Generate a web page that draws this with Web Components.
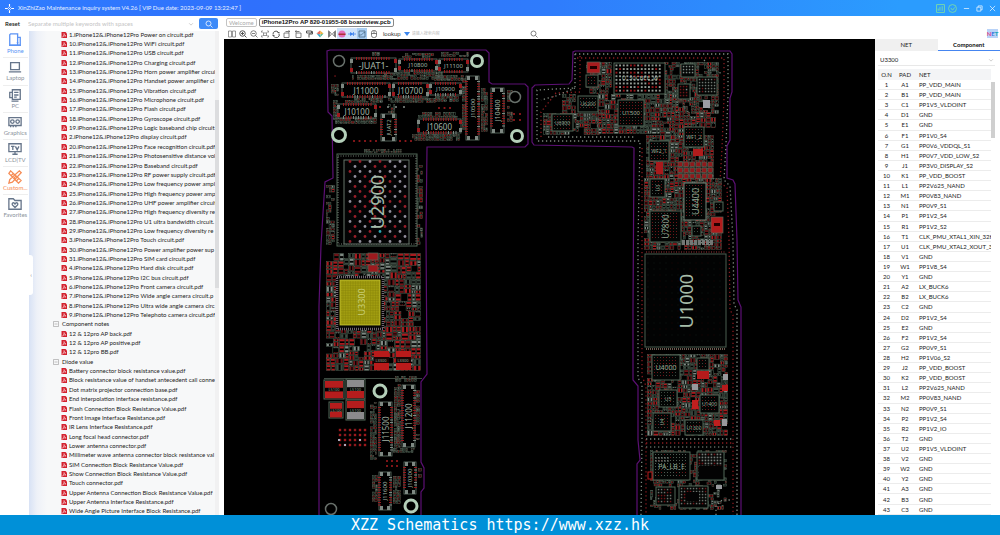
<!DOCTYPE html>
<html lang="en">
<head>
<meta charset="utf-8">
<title>XinZhiZao Maintenance inquiry system</title>
<style>
html, body { margin: 0; height: 100%; }
body { font: 6px/8px Lato, "Noto Sans", "Noto Sans CJK SC", sans-serif; color: #1c1c1c; background: #fff; overflow: hidden; }
</style>
</head>
<body>
<xz-app></xz-app>
<script>
const define = (name, html, setup) => customElements.define(name, class extends HTMLElement {
  connectedCallback() {
    if (this.shadowRoot) return;
    const t = document.createElement('template');
    t.innerHTML = typeof html === 'function' ? html(this) : html;
    this.attachShadow({ mode: 'open' }).append(t.content.cloneNode(true));
    if (setup) setup(this);
  }
});

const icons = {
  logo: '<path d="M8 0v5M8 11v5M0 8h5M11 8h5" stroke-width="2"/><path d="M5.5 5.500 8 8l3-3M5 11l3-3 2.500 2.500" stroke-width="1.200"/>',
  phone: '<path d="M3 1h8v13H2V2zM11 5h3v9h-3M10 11h2" /><path d="M1.500 14h13"/>',
  laptop: '<path d="M3 3h10v8H3zM1 13.500h14"/>',
  pc: '<path d="M5 2h9v11H5zM7 5h5M7 8h5M7 10.500h3M5 5H2v6h3M4 15h8"/>',
  graphics: '<path d="M1 3h14v9H1zM3 12v2M6 12v2M9 12v2"/><circle cx="5" cy="7.500" r="2"/><circle cx="11" cy="7.500" r="2"/>',
  lcd: '<path d="M1 2h14v9H1zM5 14h6M8 11v3M3.500 5h4M5.500 5v4M8.500 5l2 4 2-4"/>',
  custom: '<path d="M3 1 15 12l-3 3L1 4zM13 1l2 2L5 14l-4 1 1-4zM4 6l2-2M7 9l2-2M10 12l2-2"/>',
  fav: '<path d="M1 2h5l2 2h7v10H1z"/><path d="M8 12 5 9c-1-3 2-3 3-1 1-2 4-2 3 1z"/>',
  search: '<circle cx="7" cy="7" r="5"/><path d="m11 11 4 4"/>',
  panes: '<path d="M1 2h6v12H1zM9 2h6v12H9z" stroke-width="1.200"/>',
  zin: '<circle cx="7" cy="7" r="5.500" stroke-width="2"/><path d="m11 11 4 4M4 7h6M7 4v6" stroke-width="2"/>',
  zout: '<circle cx="7" cy="7" r="5.500"/><path d="m11 11 4 4M4 7h6"/>',
  fit: '<path d="M1 5V2h3M12 2h3v3M15 11v3h-3M4 14H1v-3M5 6h6v5H5zM3 4l2 2M13 4l-2 2M3 12l2-2M13 12l-2-2" stroke-width="1.200"/>',
  rotate: '<path d="M2 9a6 6 0 0 1 11-4M14 7a6 6 0 0 1-11 5M11 5h4M1 11h4" stroke-width="2"/>',
  turnr: '<path d="M2 6h10v9H2zM5 3h8M11 1l3 2-3 2" stroke-width="1.500"/>',
  turnl: '<path d="M4 6h10v9H4zM3 3h8M5 1 2 3l3 2" stroke-width="1.500"/>',
  brush: '<path d="M3 2h10v4H3zM13 3h2v5H8v7" stroke-width="2"/>',
  flip: '<path d="M1 1v14M15 1v14M3 3l4 5-4 5zM13 3 9 8l4 5z"/>',
  layers: '<path d="M1 7l7-6 1 8z" fill="#ef6a5a" stroke="none"/><path d="M8 1l7 6-6 2z" fill="#f1b13e" stroke="none"/><path d="M1 7l7 2v6z" fill="#35a4c8" stroke="none"/><path d="M15 7 9 9l-1 6z" fill="#43b58a" stroke="none"/>',
  pink: '<circle cx="8" cy="8" r="7" fill="#e26ab8" stroke="none"/><path d="M1 7h14v3H1z" fill="#a33" stroke="none"/>',
  diode: '<path d="M0 8h16M11 4v8" stroke="#3c82ee" stroke-width="1.500"/><path d="M4 4l7 4-7 4z" fill="#3c82ee" stroke="none"/>',
  mirror: '<path d="M2 2h12v12H2zM2 10h3c4 0 4-5 9-5" stroke="#40627c"/>',
  mouse: '<rect x="3" y="1" width="10" height="14" rx="4"/><path d="M3 7h10M8 1v6" stroke-width="1.500"/>',
  chev: '<path d="m3 6 5 5 5-5"/>',
  min: '<path d="M2 8h12"/>',
  restore: '<path d="M2 5h9v9H2zM5 5V2h9v9h-3"/>',
  close: '<path d="m2 2 12 12M14 2 2 14"/>',
  chart: '<path d="M1 1h14v14H1zM4 12V8M7 12V5M11 12V4"/>',
  help: '<circle cx="8" cy="8" r="7"/><path d="M5 7l3 4 4-5" />'
};
define('xz-icon', el => `<style>
:host{display:inline-flex;flex:none;width:9px;height:9px}
svg{width:100%;height:100%;fill:none;stroke:currentColor;stroke-width:1.500}
</style><svg viewBox="0 0 16 16" aria-hidden="true">${icons[el.getAttribute('name')]}</svg>`);

define('xz-titlebar', `<style>
:host{display:flex;align-items:center;height:16px;color:#e8f1ff;background:linear-gradient(90deg,#2f7dff,#2f70fc 25%,#2f7cfc 55%,#2b9cfe 90%)}
h1{font:inherit;font-family:Lato,sans-serif;margin:0 auto 0 4px}
.logo{margin-left:5px;color:#fff}
.g{color:#7fe0a0;margin-right:3px}
button{all:unset;display:flex;margin:0 3px;color:#fff}
button xz-icon{width:7px;height:7px}
.end{margin-right:4px}
</style><xz-icon class="logo" name="logo"></xz-icon>
<h1>XinZhiZao Maintenance inquiry system V4.26 [ VIP Due date: 2023-09-09 13:22:47 ]</h1>
<xz-icon class="g" name="chart"></xz-icon><xz-icon class="g" name="help"></xz-icon>
<button aria-label="Minimize"><xz-icon name="min"></xz-icon></button><button aria-label="Restore"><xz-icon name="restore"></xz-icon></button><button class="end" aria-label="Close"><xz-icon name="close"></xz-icon></button>`);

define('xz-search', `<style>
:host{display:flex;align-items:center;height:15px;background:#fff}
button{all:unset;display:flex;align-items:center;justify-content:center}
.reset{width:25px;color:#111;font-weight:600}
input{all:unset;flex:1;min-width:0;padding-left:3px;height:11px}
input::placeholder{color:#c4c4c4;opacity:1}
.dd{color:#aaa;margin-right:3px;width:6px;height:6px}
.go{background:#3f8bf8;border-radius:2px;width:19px;height:11px;color:#fff;margin:0 1px 0 2px}
.go xz-icon{width:8px;height:8px}
</style><button class="reset">Reset</button><input aria-label="Keywords" placeholder="Separate multiple keywords with spaces"><xz-icon class="dd" name="chev"></xz-icon><button class="go" aria-label="Search"><xz-icon name="search"></xz-icon></button>`);

define('xz-nav', `<style>
:host{display:flex;flex-direction:column;width:29px;background:#fff}
nav{display:flex;flex-direction:column;flex:1}
ul{list-style:none;margin:0;padding:0 3px;display:grid;grid-auto-rows:1fr;flex:0 0 191px}
li{border-bottom:1px solid #eee;display:grid}
li:last-child{border:0}
a{display:flex;flex-direction:column;align-items:center;justify-content:center;color:#8b929c;text-decoration:none;white-space:nowrap}
xz-icon{width:14px;height:14px;color:#66758a}
.on,.on xz-icon{color:#5c94f5}
.hot,.hot xz-icon{color:#f68c55}
</style><nav><ul>${[['phone','Phone','on'],['laptop','Laptop',''],['pc','PC',''],['graphics','Graphics',''],['lcd','LCD|TV',''],['custom','Custom...','hot'],['fav','Favorites','']].map(([i,t,c])=>`<li><a href="#" class="${c}"><xz-icon name="${i}"></xz-icon>${t}</a></li>`).join('')}</ul></nav>`);

const P = '.iPhone12&amp;.iPhone12Pro ';
const circuits = ['1|Power on circuit.pdf','10|WiFi circuit.pdf','11|USB circuit.pdf','12|Charging circuit.pdf','13|Horn power amplifier circui','14|Handset power amplifier ci','15|Vibration circuit.pdf','16|Microphone circuit.pdf','17|Flash circuit.pdf','18|Gyroscope circuit.pdf','19|Logic baseband chip circuit','2|display circuit.pdf','20|Face recognition circuit.pdf','21|Photosensitive distance vol','22|Baseband circuit.pdf','23|RF power supply circuit.pdf','24|Low frequency power ampl','25|High frequency power amp','26|UHF power amplifier circuit','27|High frequency diversity re','28|U1 ultra bandwidth circuit.','29|Low frequency diversity re','3|Touch circuit.pdf','30|Power amplifier power sup','31|SIM card circuit.pdf','4|Hard disk circuit.pdf','5|I2C bus circuit.pdf','6|Front camera circuit.pdf','7|Wide angle camera circuit.p','8|Ultra wide angle camera circ','9|Telephoto camera circuit.pdf'];
const rows = [
  ...circuits.map(c => c.replace('|', P)),
  '#Component notes','12 &amp; 12pro AP back.pdf','12 &amp; 12pro AP positive.pdf','12 &amp; 12pro BB.pdf','#Diode value',
  'Battery connector block resistance value.pdf','Block resistance value of handset antecedent call conne','Dot matrix projector connection base.pdf','End interpolation interface resistance.pdf','Flash Connection Block Resistance Value.pdf','Front Image Interface Resistance.pdf','IR Lens Interface Resistance.pdf','Long focal head connector.pdf','Lower antenna connector.pdf','Millimeter wave antenna connector block resistance val','SIM Connection Block Resistance Value.pdf','Show Connection Block Resistance Value.pdf','Touch connector.pdf','Upper Antenna Connection Block Resistance Value.pdf','Upper Antenna Interface Resistance.pdf','Wide Angle Picture Interface Block Resistance.pdf'];
define('xz-tree', `<style>
:host{position:relative;display:flex;flex:1;min-width:0;min-height:0;overflow:hidden;background:linear-gradient(90deg,#d8e2f5,#eef1f8 8px,#f7f8f9 18px)}
ul{flex:1;min-width:0;display:grid;grid-auto-rows:1fr;margin:-1px 0;padding:0 0 0 24px;list-style:none;overflow:hidden}
li{display:flex;align-items:center;min-width:0;min-height:0}
a{display:flex;align-items:center;gap:2px;margin-left:8px;color:inherit;text-decoration:none;white-space:nowrap}
svg{width:6px;height:6px;flex:none}
button{all:unset;display:flex;align-items:center;gap:3px}
.bar{width:4px;flex:none;background:#f1f1f2;display:flex;flex-direction:column}
.bar::before{content:"";flex:0 0 69px}
.bar::after{content:"";flex:0 0 188px;background:#dcdddf}
.pull{position:absolute;left:0;top:224px;width:4px;height:40px;background:#fff;border-radius:0 3px 3px 0;color:#888;align-items:center;justify-content:center;display:flex}
</style><ul>${rows.map(r => r[0]==='#' ? `<li><button><svg viewBox="0 0 12 12" fill="none" stroke="#888"><path d="M1 1h10v10H1zM3 6h6"/></svg>${r.slice(1)}</button></li>` : `<li><a href="#"><svg viewBox="0 0 12 12"><path d="M1 0h8l3 3v9H1z" fill="#d3222f"/><path d="M3 10c2-1 3-4 3-7 1 3 3 5 4 5-3-1-5 0-7 2" fill="none" stroke="#fff"/></svg>${r}</a></li>`).join('')}</ul><div class="bar"></div><button class="pull" aria-label="Collapse">‹</button>`);

define('xz-tabs', `<style>
:host{display:flex;align-items:center;gap:2px;height:12px;padding-left:2px;background:#fff}
button{all:unset;box-sizing:border-box;height:9px;line-height:7px;padding:0 2px;border:1px solid #c3c3c3;border-radius:2px;color:#aaa;min-width:30px;text-align:center}
.on{color:#111;border-color:#888;font:700 6px/7px "Liberation Sans",sans-serif;padding:0 2px}
</style><button>Welcome</button><button class="on">iPhone12Pro AP 820-01955-08 boardview.pcb</button>`);

define('xz-toolbar', `<style>
:host{display:flex;align-items:center;height:11px;padding:0 2px 0 2px;background:#fff;color:#555}
button{all:unset;display:flex;padding:1px;height:9px;width:9px;align-items:center;justify-content:center}
xz-icon{width:8px;height:8px}
.sel{background:#cfe3fb;width:8px}
.sel2{background:#a9cdf2;width:8px}
.gap{margin-left:1px}
label{margin-left:4px;color:#333;display:flex;align-items:center;gap:3px;font-family:"Liberation Sans",sans-serif}
label::after{content:"";border:3px solid transparent;border-top:4px solid #3b86ee;border-bottom:0}
input{all:unset;width:117px;font-size:4px;margin-left:2px;color:#333}
input::placeholder{color:#bbb;opacity:1}
.net{margin-left:auto;background:#b9d3f8;font-weight:700;width:11px;padding:0}
i{font-style:normal}.a{color:#e04a8c}.b{color:#3a78e0}.c{color:#18a5b8}
</style>${['panes','zin','zout','fit','rotate','turnr','turnl','brush','layers'].map(n=>`<button aria-label="${n}"><xz-icon name="${n}"></xz-icon></button>`).join('')}<button class="gap" aria-label="flip"><xz-icon name="flip"></xz-icon></button><button class="sel" aria-label="layer colour"><xz-icon name="pink"></xz-icon></button><button class="sel" aria-label="diode"><xz-icon name="diode"></xz-icon></button><button class="sel2" aria-label="mirror"><xz-icon name="mirror"></xz-icon></button><button class="gap" aria-label="mouse"><xz-icon name="mouse"></xz-icon></button><label for="q">lookup</label><input id="q" placeholder="请输入搜索内容"><button aria-label="find"><xz-icon name="search"></xz-icon></button><button class="net"><i class="a">N</i><i class="b">E</i><i class="c">T</i></button>`);

function drawBoard() {
  let seed = 77, s = '';
  const R = () => (seed = (seed * 16807) % 2147483647) / 2147483647;
  const G = '#536859', RED = '#9c1a1e', DR = '#6d1418', GY = '#7e8882';
  const rect = (x,y,w,h,f,st,sw=.7) => { s += `<rect x="${x.toFixed(1)}" y="${y.toFixed(1)}" width="${w.toFixed(1)}" height="${h.toFixed(1)}" fill="${f}"${st?` stroke="${st}" stroke-width="${sw}"`:''}/>`; };
  const text = (t,x,y,fs,rot,c='#8fa693') => { s += `<text x="${x}" y="${y}" font-size="${fs}" fill="${c}" text-anchor="middle" dominant-baseline="central"${rot?` transform="rotate(-90 ${x} ${y})"`:''}>${t}</text>`; };
  let redShare = .36;
  const part = (x,y,w,h) => {
    const k = R(), pad = k < redShare ? '#a81b1f' : k < redShare+.15 ? GY : k < .85 ? DR : '#3c4a41';
    if (R() < .1) { rect(x,y,w,h,'#000',G,.5); for (let i=x+1;i<x+w-1;i+=1.800) { rect(i,y,.8,1,GY); rect(i,y+h-1,.8,1,RED); } return; }
    rect(x,y,w,h,'#000',G,.5);
    if (w>h) { rect(x+.3,y+.3,w*.34,h-.6,pad); rect(x+w*.66,y+.3,w*.34-.3,h-.6,pad); }
    else { rect(x+.3,y+.3,w-.6,h*.34,pad); rect(x+.3,y+h*.66,w-.6,h*.34-.3,pad); }
  };
  const fill = (x,y,w,h,m=6,d=.9) => {
    if (w > m || h > m) {
      const q = .35 + R()*.3;
      if (w > h) { fill(x,y,w*q,h,m,d); fill(x+w*q,y,w*(1-q),h,m,d); }
      else { fill(x,y,w,h*q,m,d); fill(x,y+h*q,w,h*(1-q),m,d); }
    } else if (R() < d) part(x+.4,y+.4,Math.max(1,w-.8),Math.max(1,h-.8));
  };
  const dots = (x,y,w,h,p,r,c1,c2,mix=.4) => { for (let j=y;j<=y+h;j+=p) for (let i=x;i<=x+w;i+=p) rect(i-r/2,j-r/2,r,r,R()<mix?c2:c1); };
  const chip = (x,y,w,h,t,fs,rot,o={}) => {
    rect(x,y,w,h,'#030504',o.st||G,1);
    dots(x+2.500,y+2.500,w-5,h-5,o.p||3,o.r||1,o.c1||'#3d4840',o.c2||DR,o.mix??.5);
    if (t) text(t,x+w/2,y+h/2,fs,rot);
  };
  const conn = (x,y,w,h,t,fs,v) => {
    rect(x,y,w,h,'#000','#63756a',.8);
    if (v) { for (let j=y+5;j<y+h-5;j+=2.500) { rect(x-1,j,3,1,RED); rect(x+w-2,j,3,1,R()<.7?RED:GY); }
      for (const a of [x+1,x+w-4]) { rect(a,y,3,4,GY); rect(a,y+h-4,3,4,GY); } }
    else { for (let i=x+5;i<x+w-5;i+=2.500) { rect(i,y-1,1,3,RED); rect(i,y+h-2,1,3,R()<.7?RED:GY); }
      for (const a of [y+1,y+h-5]) { rect(x-1,a,3,4,a>y+2?RED:GY); rect(x+w-2,a,3,4,a>y+2?GY:RED); } }
    text(t,x+w/2,y+h/2,fs,v,'#a3b5a6');
  };
  const ring = (x,y,r,thick) => { s += `<circle cx="${x}" cy="${y}" r="${r}" fill="#000" stroke="${thick?'#b4cfb9':'#68706b'}" stroke-width="${thick?3:1.500}"/>`; };
  const line = (pts,c,w,dash='') => { s += `<polyline points="${pts}" fill="none" stroke="${c}" stroke-width="${w}" ${dash?`stroke-dasharray="${dash}"`:''}/>`; };

  const PUR = '#5c1074';
  line('319,515 319,306 321,245 325,182 333,178 332,116 328,112 327,51 330,50 486,50 489,53 489,82 492,84 525,84 528,87 528,144 525,147 427,147 426,234 427,374 421,382 421,462 424,468 424,488 421,492 421,515', PUR, 1.200);
  line('637,515 637,464 640,460 638,440 638,386 633,380 633,310 634,148 632,147 534,145 532,142 532,88 535,85 569,84 572,80 573,52 575,51 730,51 732,54 732,92 730,98 730,140 727,146 727,178 733,180 735,184 737,240 738,300 741,307 741,515', PUR, 1.200);

  /* left board, upper section */
  [[352,75,38,5],[384,72,64,8],[441,52,28,5],[345,98,38,5],[388,98,48,5],[432,75,32,6],[435,96,24,6],[335,118,42,6],[418,112,40,6],[412,134,48,7],[481,88,7,44],[507,90,6,32],[331,84,8,12],[333,100,5,20],[388,104,7,14],[462,78,4,52],[372,52,8,4],[400,53,34,5]].forEach(a => fill(...a,4,.85));
  conn(351,58,45,15,'-JUAT1-',9); conn(399,59,38,12,'J10800',6); conn(439,59,29,13,'J11100',6);
  conn(342,83,48,14,'J11000',8); conn(393,83,35,14,'J10700',8); conn(430,83,31,12,'J10900',6);
  conn(338,104,38,14,'J10100',8); conn(418,119,43,14,'J10600',8);
  conn(381,114,15,27,'JUAT2',6,1); conn(466,76,13,64,'J10500',6,1); conn(491,88,13,45,'J10400',7,1);
  ring(339,61,5.500); ring(477,61,5.500,1); ring(515,97,5.500); ring(517,136,5.500,1); ring(339,135,6.500,1);
  dots(354,141,23,0,5.500,1.800,RED,RED); dots(400,141,12,0,5.500,1.800,RED,RED); dots(439,108,12,0,5.500,1.800,RED,RED);
  dots(514,114,7,7,6,1.800,RED,RED); dots(335,76,2,30,15,1.500,RED,DR); dots(380,107,30,0,8,1.800,GY,RED);

  /* U2900 */
  fill(364,149,38,4,3,.8); fill(326,185,9,60,5,.6); fill(416,165,7,80,5,.55);
  rect(337,154,80,92,'#000',G,1); line('338,156 416,156 416,244 338,244 338,156','#6f7a71',1.200,'1 1.500');
  rect(344,160,65,84,'#040405','#66756b',1);
  for (let j=0;j<17;j++) for (let i=0;i<12;i++) if ((i+j)%2===0) s += `<circle cx="${350+i*5}" cy="${161.500+j*5}" r="1.400" fill="${R()<.42?'#96202a':R()<.04?'#2aa5b0':'#8f8c98'}"/>`;
  text('U2900',377,202,18,1,'#a6bca8');

  /* U3300 */
  redShare = .5;
  fill(326,253,95,118,8,.95);
  rect(336,276,48,54,'#050505'); line('337,277 383,277 383,329 337,329 337,277','#6f6570',2.500,'1 1');
  rect(340,280,40,45,'#a19d10','#c4c030',.8);
  for (let i=343;i<380;i+=2.500) line(`${i},281 ${i},324`,'#8a860a',.5);
  for (let i=283;i<325;i+=2.500) line(`341,${i} 379,${i}`,'#8a860a',.5);
  text('U3300',361,302,9,1,'#c9cf78');
  for (const x of [374,396]) { rect(x,351,15,19,'#b91b1b'); rect(x,357,15,6,'#1a0505'); text('L3300',x+7,360,4,0); }
  for (const y of [262,274]) { rect(368,y-9,10,7,RED,G); }

  /* left board, lower section */
  const coil = (x,y,w,h,a,b) => { rect(x,y,w,h,'#000',G,1); rect(x+1,y+1,w-2,h*.36,a); rect(x+1,y+h*.6,w-2,h*.36,b); text('L5100',x+w/2,y+h/2,4,0); };
  rect(324,378,98,1,'#3d4a41');
  coil(324,380,20,19,'#b51d1d','#b51d1d'); coil(346,379,19,20,'#8b8b8d','#b51d1d'); coil(329,402,14,16,'#b51d1d','#b51d1d'); coil(346,400,19,20,'#b51d1d','#8b8b8d');
  dots(340,430,26,16,5,2.400,'#9c191d','#8c191d'); rect(338,439,2,2,'#aab'); rect(359,439,2,2,'#aab'); rect(344,444,2,2,'#aab');
  redShare = .2;
  fill(370,402,7,58,4); fill(394,384,7,64,4); fill(393,448,22,5,4); fill(416,390,4,50,4); fill(395,376,22,6,4); fill(372,475,6,27,4); fill(393,476,8,28,4); fill(418,468,4,10,4); fill(394,404,6,40,4);
  conn(379,402,13,54,'J11500',8,1); conn(402,385,13,62,'J11200',8,1); conn(404,462,12,32,'J10300',6,1); conn(379,472,12,38,'J11600',6,1);
  ring(380,391,6,1); ring(411,506,6,1); ring(331,509,5.500);
  dots(387,461,12,5,5,1.800,RED,GY,.3);

  /* right board, via fences */
  const fence = (p,c,w='1.300',d='1.300 2.700') => line(p,c,w,d);
  fence('575,54 728,54 728,96 726,144 724,180 730,186 733,240 734,304 737,310 737,515','#7f887f');
  fence('577,58 724,58 724,98 722,148 720,182 727,188 729,240 730,310 733,315 733,515','#8a1c20');
  fence('575,54 575,88 537,90 537,141 640,141 638,240 638,378 642,384 642,442 641,515','#7f887f');
  fence('580,56 580,92 556,93 541,112 541,138','#8a1c20'); fence('548,137 636,137','#7f887f');
  fence('642,148 642,376 646,386 646,515','#8a1c20');
  fence('646,439 732,439','#7f887f'); fence('646,443 732,443','#8a1c20'); fence('646,447 732,447','#5f675f');
  fence('704,60 712,68 722,74','#7f887f'); fence('575,88 556,96 541,100','#7f887f');

  /* right board, upper parts */
  redShare = .34;
  fill(586,62,26,32,6,.85); fill(664,62,55,52,5,.75); fill(562,94,14,20,6,.85); fill(543,113,60,22,6,.85); fill(598,94,62,40,6.500,.92); fill(660,94,24,50,6,.88); fill(646,135,68,45,6,.92); fill(644,178,78,72,6,.92); fill(684,112,32,16,6,.8);
  rect(587,62,13,11,'#a81c1e',G); rect(590,66,7,3,'#200');
  rect(614,63,51,31,'#000',G,1); dots(616.500,65.500,46,26,3.600,1.900,'#929992','#95181c',.25); text('U_30CBEE_W',640,78,6,0,'#a8b8a8');
  chip(578,96,20,16,'U6200',5); chip(552,114,21,17,'U6900',5); chip(618,100,26,26,'U1500',6,0,{mix:.7}); chip(586,75,12,12,'',5);
  chip(681,64,14,13,'',5,0,{r:1.500,c1:GY,mix:.1}); chip(697,77,20,18,'',5,0,{r:1.500,c1:'#6d756f',mix:.1}); chip(678,84,12,15,'',5,0,{r:1.500,c1:GY,mix:.6}); rect(703,100,7,8,'#9c9ca4');
  chip(684,127,20,20,'WF1_2',5); chip(649,141,20,20,'WF2_1',5); 
  for (let j=0;j<3;j++) for (let i=0;i<6;i++) rect(678+i*6,162+j*6,4.500,4.500,'#8f181b',G,.6);
  rect(693,149,10,7,'#b01c1c'); rect(656,162,7,12,'#a81a1c');
  chip(650,179,15,18,'U3',5,1); chip(684,183,22,37,'U4400',9,1,{st:'#74887a'}); chip(650,211,31,31,'U7800',8,1,{mix:.65}); chip(692,226,9,10,'',5);
  rect(711,217,12,16,'#b01c1c',G); rect(714,223,6,3,'#200'); chip(714,202,9,9,'',5);
  for (let i=0;i<8;i++) rect(682+i*4,240,3,5,'#747876');

  /* U1000 */
  rect(645,251,82,98,'#000');
  rect(645,254,81,93,'#020303','#4b5e51',1); dots(648,257,76,87,6,.8,'#1f2a22','#340a0c',.5);
  line('646,252 726,252','#6d2327',1.500,'1 1.500'); line('646,349 726,349','#6e5a50',2,'1 1'); text('U1000',686,301,18,1,'#a6bca8');

  /* right board, lower parts */
  fill(647,354,81,82,6.500,.9); fill(650,450,77,60,5,.55);
  chip(652,355,28,25,'U4000',7,0,{mix:.7}); chip(659,390,18,17,'U5',5,0); chip(653,413,18,18,'U4',5,1); chip(700,395,19,18,'U1400',5,0,{mix:.7}); chip(685,420,18,15,'U1300',5); chip(697,358,12,12,'',5);
  rect(697,371,12,8,'#b51b1b'); rect(692,400,6,9,'#c01f1f'); rect(722,385,6,6,'#b51b1b'); rect(714,420,6,6,'#c01f1f'); rect(722,419,5,7,'#98989c'); rect(723,374,5,6,'#98989c'); rect(692,384,6,6,'#98989c');
  chip(653,452,37,28,'PA_LB_E',7,0,{mix:.15,c1:'#4f5b52'}); dots(656,458,14,4,3,1.400,GY,GY); chip(697,452,27,28,'',5,0,{r:1.700,c1:'#777c78',mix:.3}); rect(699,466,23,12,'#030303'); chip(679,486,29,22,'',5,0,{r:1.500,c1:'#6b706c',mix:.35}); rect(686,492,13,9,'#030303'); chip(656,487,19,18,'',5,0,{r:1.500,c1:'#6b706c',mix:.4});
  rect(716,485,6,4,'#98989c'); rect(648,472,4,7,'#000','#b51b1b',1); fence('716,515 716,506 722,500 732,500','#7f887f');
  return s;
}
define('xz-board', `<style>
:host{display:block;flex:1;min-width:0;min-height:0;background:#000;overflow:hidden}
svg{display:block;width:100%;height:100%;font-family:"Noto Sans",sans-serif}
</style><svg viewBox="224 39 651 476" preserveAspectRatio="xMidYMin slice" role="img" aria-label="Board view">${drawBoard()}</svg>`);

const nets = 'PP_VDD_MAIN PP_VDD_MAIN PP1V5_VLDOINT GND GND PP1V0_S4 PP0V6_VDDQL_S1 PP0V7_VDD_LOW_S2 PP3V0_DISPLAY_S2 PP_VDD_BOOST PP2V625_NAND PP0V83_NAND PP0V9_S1 PP1V2_S4 PP1V2_S2 CLK_PMU_XTAL1_XIN_32K CLK_PMU_XTAL2_XOUT_32 GND PP1V8_S4 GND LX_BUCK6 LX_BUCK6 GND PP1V2_S4 GND PP1V2_S4 PP0V9_S1 PP1V06_S2 PP_VDD_BOOST PP_VDD_BOOST PP2V625_NAND PP0V83_NAND PP0V9_S1 PP1V2_S4 PP1V2_IO GND PP1V5_VLDOINT GND GND GND GND GND GND'.split(' ');
const L = 'ABCDEFGHJKLMNPRTUVWY';
define('xz-nets', `<style>
:host{display:flex;flex-direction:column;width:125px;flex:none;min-height:0;background:#fff}
.tabs{display:grid;grid-template-columns:1fr 1fr;flex:0 0 12px}
.tabs button{all:unset;text-align:center;background:#f0f0f0;line-height:12px}
.tabs .on{background:#fff;font-weight:700;border-bottom:1px solid #4585f0;line-height:11px;color:#111}
.pick{display:flex;align-items:center;margin:4px 5px 3px 3px;border-bottom:1px solid #e8e8e8;height:10px;flex:none}
select{all:unset;flex:1;padding-left:2px}
.pick xz-icon{width:6px;height:6px;color:#aaa;margin-right:1px}
.wrap{flex:1;min-height:0;display:flex;margin:0 5px 0 3px}
table{width:100%;height:100%;border-collapse:collapse;table-layout:fixed}
.cell{flex:1;min-width:0;display:grid}
th{font-weight:400;background:#f3f4f6;height:11px}
th,td{padding:0;line-height:9px;text-align:center;white-space:nowrap;overflow:hidden}
td{border-bottom:1px solid #ececec}
th:last-child,td:last-child{text-align:left;padding-left:4px}
.bar{width:4px;flex:none;display:flex;flex-direction:column}
.bar::before{content:"";flex:0 0 13px}
.bar::after{content:"";flex:0 0 56px;background:#cfcfcf}
</style><div class="tabs"><button>NET</button><button class="on">Component</button></div>
<div class="pick"><select aria-label="Component"><option>U3300</option></select><xz-icon name="chev"></xz-icon></div>
<div class="wrap"><div class="cell"><table><colgroup><col style="width:17px"><col style="width:20px"><col></colgroup><thead><tr><th>O.N</th><th>PAD</th><th>NET</th></tr></thead><tbody>${nets.map((n,i)=>`<tr><td>${i+1}</td><td>${L[i%20]}${Math.floor(i/20)+1}</td><td>${n}</td></tr>`).join('')}</tbody></table></div><div class="bar"></div></div>`);

define('xz-footer', `<style>
:host{display:flex;align-items:center;justify-content:center;height:20px;flex:none;background:#0090d8;color:#fff;font:15px/20px "DejaVu Sans Mono",monospace}
</style><slot></slot>`);

define('xz-app', `<style>
:host{display:flex;flex-direction:column;height:100vh}
main{flex:1;min-height:0;display:flex}
.left{width:219px;margin-right:5px;flex:none;display:flex;flex-direction:column}
.row{flex:1;min-height:0;display:flex}
.right{flex:1;min-width:0;display:flex;flex-direction:column}
</style><xz-titlebar></xz-titlebar><main><div class="left"><xz-search></xz-search><div class="row"><xz-nav></xz-nav><xz-tree></xz-tree></div></div><div class="right"><xz-tabs></xz-tabs><xz-toolbar></xz-toolbar><div class="row"><xz-board></xz-board><xz-nets></xz-nets></div></div></main><xz-footer>XZZ Schematics https://www.xzz.hk</xz-footer>`);
</script>
</body>
</html>
